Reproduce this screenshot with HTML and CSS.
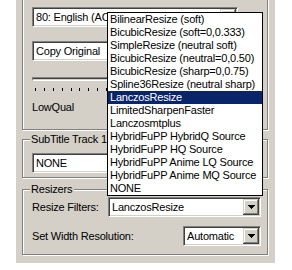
FILE: index.html
```html
<!DOCTYPE html>
<html>
<head>
<meta charset="utf-8">
<link rel="stylesheet" href="styles.css">
</head>
<body>
<div class="panel">
  <div class="group g1">
    <div class="combo c-top"><span class="val">80: English (AC3)</span><span class="btn"><svg width="7" height="4" viewBox="0 0 7 4"><rect x="0" y="0" width="7" height="1"/><rect x="1" y="1" width="5" height="1"/><rect x="2" y="2" width="3" height="1"/><rect x="3" y="3" width="1" height="1"/></svg></span></div>
    <div class="combo c-top c-copy"><span class="val">Copy Original</span><span class="btn"><svg width="7" height="4" viewBox="0 0 7 4"><rect x="0" y="0" width="7" height="1"/><rect x="1" y="1" width="5" height="1"/><rect x="2" y="2" width="3" height="1"/><rect x="3" y="3" width="1" height="1"/></svg></span></div>
    <div class="track"></div>
    <div class="ticks"><i></i><i></i><i></i><i></i><i></i><i></i><i></i><i></i><i></i><i></i><i></i><i></i><i></i><i></i><i></i><i></i><i></i><i></i><i></i><i></i><i></i><i></i><i></i><i></i><i></i></div>
    <div class="lbl">LowQual</div>
  </div>
  <div class="group g2">
    <span class="legend">SubTitle Track 1</span>
    <div class="combo c-sub"><span class="val">NONE</span><span class="btn"><svg width="7" height="4" viewBox="0 0 7 4"><rect x="0" y="0" width="7" height="1"/><rect x="1" y="1" width="5" height="1"/><rect x="2" y="2" width="3" height="1"/><rect x="3" y="3" width="1" height="1"/></svg></span></div>
  </div>
  <div class="group g3">
    <span class="legend">Resizers</span>
    <div class="row r1">
      <span class="lbl">Resize Filters:</span>
      <div class="combo c-filter"><span class="val">LanczosResize</span><span class="btn"><svg width="7" height="4" viewBox="0 0 7 4"><rect x="0" y="0" width="7" height="1"/><rect x="1" y="1" width="5" height="1"/><rect x="2" y="2" width="3" height="1"/><rect x="3" y="3" width="1" height="1"/></svg></span></div>
    </div>
    <div class="row r2">
      <span class="lbl">Set Width Resolution:</span>
      <div class="combo c-auto"><span class="val">Automatic</span><span class="btn"><svg width="7" height="4" viewBox="0 0 7 4"><rect x="0" y="0" width="7" height="1"/><rect x="1" y="1" width="5" height="1"/><rect x="2" y="2" width="3" height="1"/><rect x="3" y="3" width="1" height="1"/></svg></span></div>
    </div>
  </div>
  <div class="list">
    <div class="item">BilinearResize (soft)</div>
    <div class="item">BicubicResize (soft=0,0.333)</div>
    <div class="item">SimpleResize (neutral soft)</div>
    <div class="item">BicubicResize (neutral=0,0.50)</div>
    <div class="item">BicubicResize (sharp=0,0.75)</div>
    <div class="item">Spline36Resize (neutral sharp)</div>
    <div class="item sel">LanczosResize</div>
    <div class="item">LimitedSharpenFaster</div>
    <div class="item">Lanczosmtplus</div>
    <div class="item">HybridFuPP HybridQ Source</div>
    <div class="item">HybridFuPP HQ Source</div>
    <div class="item">HybridFuPP Anime LQ Source</div>
    <div class="item">HybridFuPP Anime MQ Source</div>
    <div class="item">NONE</div>
  </div>
</div>
</body>
</html>
```
FILE: styles.css
```css
html, body {
  margin: 0;
  padding: 0;
  background: #ffffff;
}
body {
  font-family: "Liberation Sans", Arial, sans-serif;
  font-size: 11px;
  letter-spacing: -0.2px;
  color: #000;
  overflow: hidden;
}
.panel {
  position: relative;
  margin-left: 16px;
  width: 259px;
  height: 263px;
  background: #d4d0c8;
  overflow: hidden;
  display: flex;
  flex-direction: column;
  padding-left: 6px;
  box-sizing: border-box;
}
.group {
  box-sizing: border-box;
  width: 246px;
  border: 1px solid #808080;
  box-shadow: inset 1px 1px 0 #fff, 1px 1px 0 #fff;
  display: flex;
  flex-direction: column;
  align-items: flex-start;
  padding-left: 9px;
  flex: none;
}
.g1 {
  margin-top: -5px;
  height: 135px;
  padding-top: 11px;
}
.g2 {
  margin-top: 9px;
  height: 39px;
}
.g3 {
  margin-top: 11px;
  height: 66px;
}
.legend {
  margin-top: -7px;
  margin-left: -2px;
  padding: 0 2px 0 1px;
  background: #d4d0c8;
  line-height: 13px;
  height: 13px;
}
.combo {
  box-sizing: border-box;
  height: 20px;
  border: 1px solid;
  border-color: #808080 #fff #fff #808080;
  background: #fff;
  box-shadow: inset 1px 1px 0 #404040, inset -1px -1px 0 #d4d0c8;
  display: flex;
  align-items: center;
  padding: 1px;
  flex: none;
}
.combo .val {
  flex: 1;
  padding-left: 2px;
  line-height: 16px;
  white-space: nowrap;
  overflow: hidden;
}
.btn {
  width: 16px;
  height: 16px;
  flex: none;
  background: #d4d0c8;
  box-shadow: inset -1px -1px 0 #404040, inset 1px 1px 0 #d4d0c8, inset -2px -2px 0 #808080, inset 2px 2px 0 #fff;
  display: flex;
  align-items: center;
  justify-content: center;
}
.btn svg {
  display: block;
  fill: #000;
  shape-rendering: crispEdges;
}
.c-top {
  width: 206px;
}
.c-copy {
  margin-top: 14px;
}
.track {
  margin-top: 16px;
  width: 226px;
  height: 4px;
  box-sizing: border-box;
  border-top: 1px solid #808080;
  border-left: 1px solid #808080;
  border-bottom: 1px solid #fff;
  border-right: 1px solid #fff;
  box-shadow: inset 0 1px 0 #404040;
}
.ticks {
  margin-top: 7px;
  margin-left: 3px;
  display: flex;
  gap: 7.9px;
  height: 3px;
}
.ticks i {
  display: block;
  width: 1px;
  height: 3px;
  background: #000;
}
.g1 .lbl {
  margin-top: 10px;
  line-height: 13px;
}
.c-sub {
  margin-top: 7px;
  width: 229px;
}
.row {
  display: flex;
  align-items: center;
  width: 229px;
  justify-content: space-between;
}
.r1 {
  margin-top: 1px;
}
.r2 {
  margin-top: 9px;
}
.c-filter {
  width: 153px;
}
.c-auto {
  width: 78px;
}
.list {
  position: absolute;
  left: 91px;
  top: 12px;
  width: 156px;
  box-sizing: border-box;
  border: 1px solid #000;
  background: #fff;
}
.item {
  height: 13px;
  line-height: 13px;
  padding-left: 2px;
  white-space: nowrap;
  overflow: hidden;
}
.item.sel {
  background: #0a246a;
  color: #fff;
}
```
